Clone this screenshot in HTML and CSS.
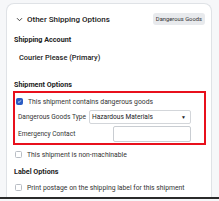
FILE: index.html
```html
<!DOCTYPE html>
<html>
<head>
<meta charset="utf-8">
<link rel="stylesheet" href="styles.css">
</head>
<body>
<div class="page">
  <div class="card">
    <div class="header">
      <svg class="chev" width="7" height="5" viewBox="0 0 7 5"><path d="M1 1.2 L3.5 3.7 L6 1.2" fill="none" stroke="#444" stroke-width="1"/></svg>
      <span class="title">Other Shipping Options</span>
      <span class="badge">Dangerous Goods</span>
    </div>
    <div class="section-label sa">Shipping Account</div>
    <div class="account">Courier Please (Primary)</div>
    <div class="section-label so">Shipment Options</div>
    <div class="dg-box">
      <label class="check-row">
        <span class="cb checked"><svg width="7" height="7" viewBox="0 0 7 7"><path d="M1.6 3.8 L2.9 5 L5.4 2" fill="none" stroke="#fff" stroke-width="1.1"/></svg></span>
        <span class="check-text">This shipment contains dangerous goods</span>
      </label>
      <div class="field-row">
        <span class="field-label">Dangerous Goods Type</span>
        <div class="select"><span>Hazardous Materials</span><span class="arrow">▼</span></div>
      </div>
      <div class="field-row er">
        <span class="field-label">Emergency Contact</span>
        <div class="input"></div>
      </div>
    </div>
    <label class="check-row plain nm">
      <span class="cb"></span>
      <span class="check-text">This shipment is non-machinable</span>
    </label>
    <div class="section-label lo">Label Options</div>
    <label class="check-row plain pp">
      <span class="cb"></span>
      <span class="check-text">Print postage on the shipping label for this shipment</span>
    </label>
  </div>
</div>
<div class="bottom-bar"></div>
</body>
</html>
```
FILE: styles.css
```css
html, body {
  margin: 0;
  padding: 0;
}
body {
  width: 219px;
  height: 201px;
  overflow: hidden;
  background: #f6f7f9;
  font-family: Roboto, "Liberation Sans", sans-serif;
  color: #222;
  position: relative;
}
.page {
  padding: 3px 7px 0 6px;
  height: 196px;
  box-sizing: border-box;
}
.card {
  background: #fff;
  border: 1px solid #dfe2e6;
  border-bottom: none;
  border-radius: 8px 8px 0 0;
  height: 196px;
  box-sizing: border-box;
  padding: 0 0 0 7px;
  display: flex;
  flex-direction: column;
}
.header {
  display: flex;
  align-items: center;
  height: 14px;
  margin-top: 8px;
  padding-left: 2px;
  padding-right: 6px;
}
.chev {
  margin-right: 4px;
}
.title {
  font-size: 8px;
  font-weight: 500;
  color: #222;
}
.badge {
  margin-left: auto;
  background: #e8eaed;
  border-radius: 3px;
  font-size: 5.8px;
  color: #333;
  padding: 0 3px;
  height: 12px;
  line-height: 12px;
}
.section-label {
  font-size: 7.2px;
  font-weight: 700;
  color: #222;
}
.sa {
  margin-top: 9px;
}
.account {
  margin-top: 9px;
  padding-left: 5px;
  font-size: 7.4px;
  font-weight: 500;
}
.so {
  margin-top: 18px;
}
.dg-box {
  margin-top: 2px;
  margin-right: 5px;
  margin-left: -1px;
  border: 2px solid #e8101c;
  height: 54px;
  box-sizing: border-box;
  padding: 4px 13px 0 1px;
}
.check-row {
  display: flex;
  align-items: center;
  height: 9px;
}
.cb {
  width: 7px;
  height: 7px;
  flex-shrink: 0;
  box-sizing: border-box;
  border: 1px solid #b8bdc4;
  border-radius: 1.5px;
  margin-right: 5px;
  display: flex;
  align-items: center;
  justify-content: center;
  background: #fff;
}
.cb.checked {
  background: #2b5cc4;
  border-color: #2b5cc4;
}
.check-text {
  font-size: 6.8px;
  color: #333;
  white-space: nowrap;
}
.field-row {
  display: flex;
  align-items: center;
  margin-top: 4px;
  padding-left: 2px;
}
.field-row.er {
  margin-top: 2px;
}
.field-label {
  font-size: 6.6px;
  color: #333;
  width: 71px;
  flex-shrink: 0;
  white-space: nowrap;
}
.select {
  flex: 1;
  height: 14px;
  box-sizing: border-box;
  border: 1px solid #d3d6da;
  border-radius: 2px;
  display: flex;
  align-items: center;
  justify-content: space-between;
  padding: 0 4px 0 2px;
  font-size: 6.6px;
  color: #222;
}
.arrow {
  font-size: 5px;
}
.input {
  flex: 1;
  margin-left: 24px;
  height: 16px;
  box-sizing: border-box;
  border: 1px solid #c9cdd2;
  border-radius: 2px;
}
.plain {
  padding-left: 1px;
}
.plain .check-text {
  font-size: 6.8px;
}
.nm {
  margin-top: 5px;
}
.lo {
  margin-top: 8px;
}
.pp {
  margin-top: 7px;
}
.bottom-bar {
  height: 2px;
  background: #2a2a2a;
  margin-top: 1px;
}
```
